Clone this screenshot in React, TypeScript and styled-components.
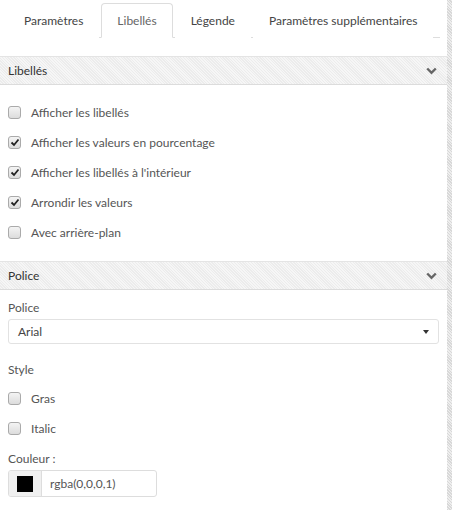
import React from "react";
import styled, { createGlobalStyle } from "styled-components";

const Global = createGlobalStyle`
  html, body { margin: 0; padding: 0; background: #fff; }
  body { font-family: Lato, "Open Sans", sans-serif; font-size: 12px; color: #555; }
  * { box-sizing: border-box; }
`;

const Page = styled.div`
  display: flex;
  width: 452px;
  height: 510px;
  overflow: hidden;
`;

const Main = styled.div`
  width: 447px;
  display: flex;
  flex-direction: column;
`;

const Strip = styled.div`
  width: 5px;
  background-color: #eee;
  background-image: repeating-linear-gradient(45deg, #d8d8d8 0 1px, transparent 1px 2px);
`;

const Tabs = styled.div`
  display: flex;
  margin: 3px 7px 0 8px;
  border-bottom: 1px solid #ddd;
  height: 35px;
`;

const Tab = styled.div<{ $active?: boolean }>`
  display: flex;
  align-items: center;
  padding: 0 15px 1px;
  margin-right: 2px;
  margin-bottom: -1px;
  height: 35px;
  border: 1px solid ${(p) => (p.$active ? "#ddd" : "transparent")};
  border-bottom-color: ${(p) => (p.$active ? "#fff" : "transparent")};
  border-radius: 4px 4px 0 0;
  background: #fff;
  color: ${(p) => (p.$active ? "#666" : "#444")};
  white-space: nowrap;
`;

const SectionHeader = styled.div<{ $top: number }>`
  margin-top: ${(p) => p.$top}px;
  height: 29px;
  display: flex;
  align-items: center;
  justify-content: space-between;
  padding: 0 10px 0 8px;
  border-top: 1px solid #e4e4e4;
  border-bottom: 1px solid #dcdcdc;
  background-color: #f6f6f6;
  background-image: repeating-linear-gradient(45deg, #ececec 0 1px, transparent 1px 2px);
  color: #333;
`;

const Body = styled.div<{ $top: number }>`
  display: flex;
  flex-direction: column;
  padding: ${(p) => p.$top}px 8px 0;
`;

const Row = styled.label<{ $top?: number }>`
  display: flex;
  align-items: center;
  height: 30px;
  margin-top: ${(p) => p.$top ?? 0}px;
  gap: 10px;
  color: #555;
`;

const Box = styled.span`
  width: 13px;
  height: 13px;
  border: 1px solid #aaa;
  border-radius: 3px;
  background: linear-gradient(#f4f4f4, #dcdcdc);
  display: flex;
  align-items: center;
  justify-content: center;
`;

const Label = styled.div<{ $top?: number }>`
  height: 20px;
  margin-top: ${(p) => p.$top ?? 0}px;
  display: flex;
  align-items: center;
  color: #555;
`;

const Select = styled.div`
  height: 25px;
  margin-top: 2px;
  border: 1px solid #e2e2e2;
  border-radius: 3px;
  display: flex;
  align-items: center;
  justify-content: space-between;
  padding: 0 9px 0 9px;
  color: #444;
`;

const Caret = styled.span`
  width: 0;
  height: 0;
  border-left: 3px solid transparent;
  border-right: 3px solid transparent;
  border-top: 4px solid #333;
`;

const ColorGroup = styled.div`
  width: 149px;
  height: 27px;
  margin-top: 2px;
  display: flex;
  border: 1px solid #ddd;
  border-radius: 3px;
  overflow: hidden;
`;

const Addon = styled.div`
  width: 33px;
  background: #f0f0f0;
  border-right: 1px solid #ddd;
  display: flex;
  align-items: center;
  justify-content: center;
`;

const Swatch = styled.span<{ $color: string }>`
  width: 16px;
  height: 16px;
  background: ${(p) => p.$color};
`;

const ColorText = styled.div`
  display: flex;
  align-items: center;
  padding-left: 8px;
  color: #555;
`;

const Chevron = () => (
  <svg width="11" height="8" viewBox="0 0 11 8">
    <path d="M1.2 1.5 L5.5 5.8 L9.8 1.5" fill="none" stroke="#666" strokeWidth="2.4" />
  </svg>
);

const Check = () => (
  <svg width="10" height="9" viewBox="0 0 10 9">
    <path d="M1.5 4.5 L4 7 L8.5 1.5" fill="none" stroke="#222" strokeWidth="1.8" />
  </svg>
);

const CheckRow = ({ label, checked, top }: { label: string; checked?: boolean; top?: number }) => (
  <Row $top={top}>
    <Box>{checked && <Check />}</Box>
    {label}
  </Row>
);

export default function App() {
  return (
    <>
      <Global />
      <Page>
        <Main>
          <Tabs>
            <Tab>Paramètres</Tab>
            <Tab $active>Libellés</Tab>
            <Tab>Légende</Tab>
            <Tab>Paramètres supplémentaires</Tab>
          </Tabs>
          <SectionHeader $top={18}>
            <span>Libellés</span>
            <Chevron />
          </SectionHeader>
          <Body $top={12}>
            <CheckRow label="Afficher les libellés" />
            <CheckRow label="Afficher les valeurs en pourcentage" checked />
            <CheckRow label="Afficher les libellés à l'intérieur" checked />
            <CheckRow label="Arrondir les valeurs" checked />
            <CheckRow label="Avec arrière-plan" />
          </Body>
          <SectionHeader $top={14}>
            <span>Police</span>
            <Chevron />
          </SectionHeader>
          <Body $top={7}>
            <Label>Police</Label>
            <Select>
              <span>Arial</span>
              <Caret />
            </Select>
            <Label $top={15}>Style</Label>
            <CheckRow label="Gras" top={4} />
            <CheckRow label="Italic" />
            <Label $top={5}>Couleur :</Label>
            <ColorGroup>
              <Addon>
                <Swatch $color="#000" />
              </Addon>
              <ColorText>rgba(0,0,0,1)</ColorText>
            </ColorGroup>
          </Body>
        </Main>
        <Strip />
      </Page>
    </>
  );
}
